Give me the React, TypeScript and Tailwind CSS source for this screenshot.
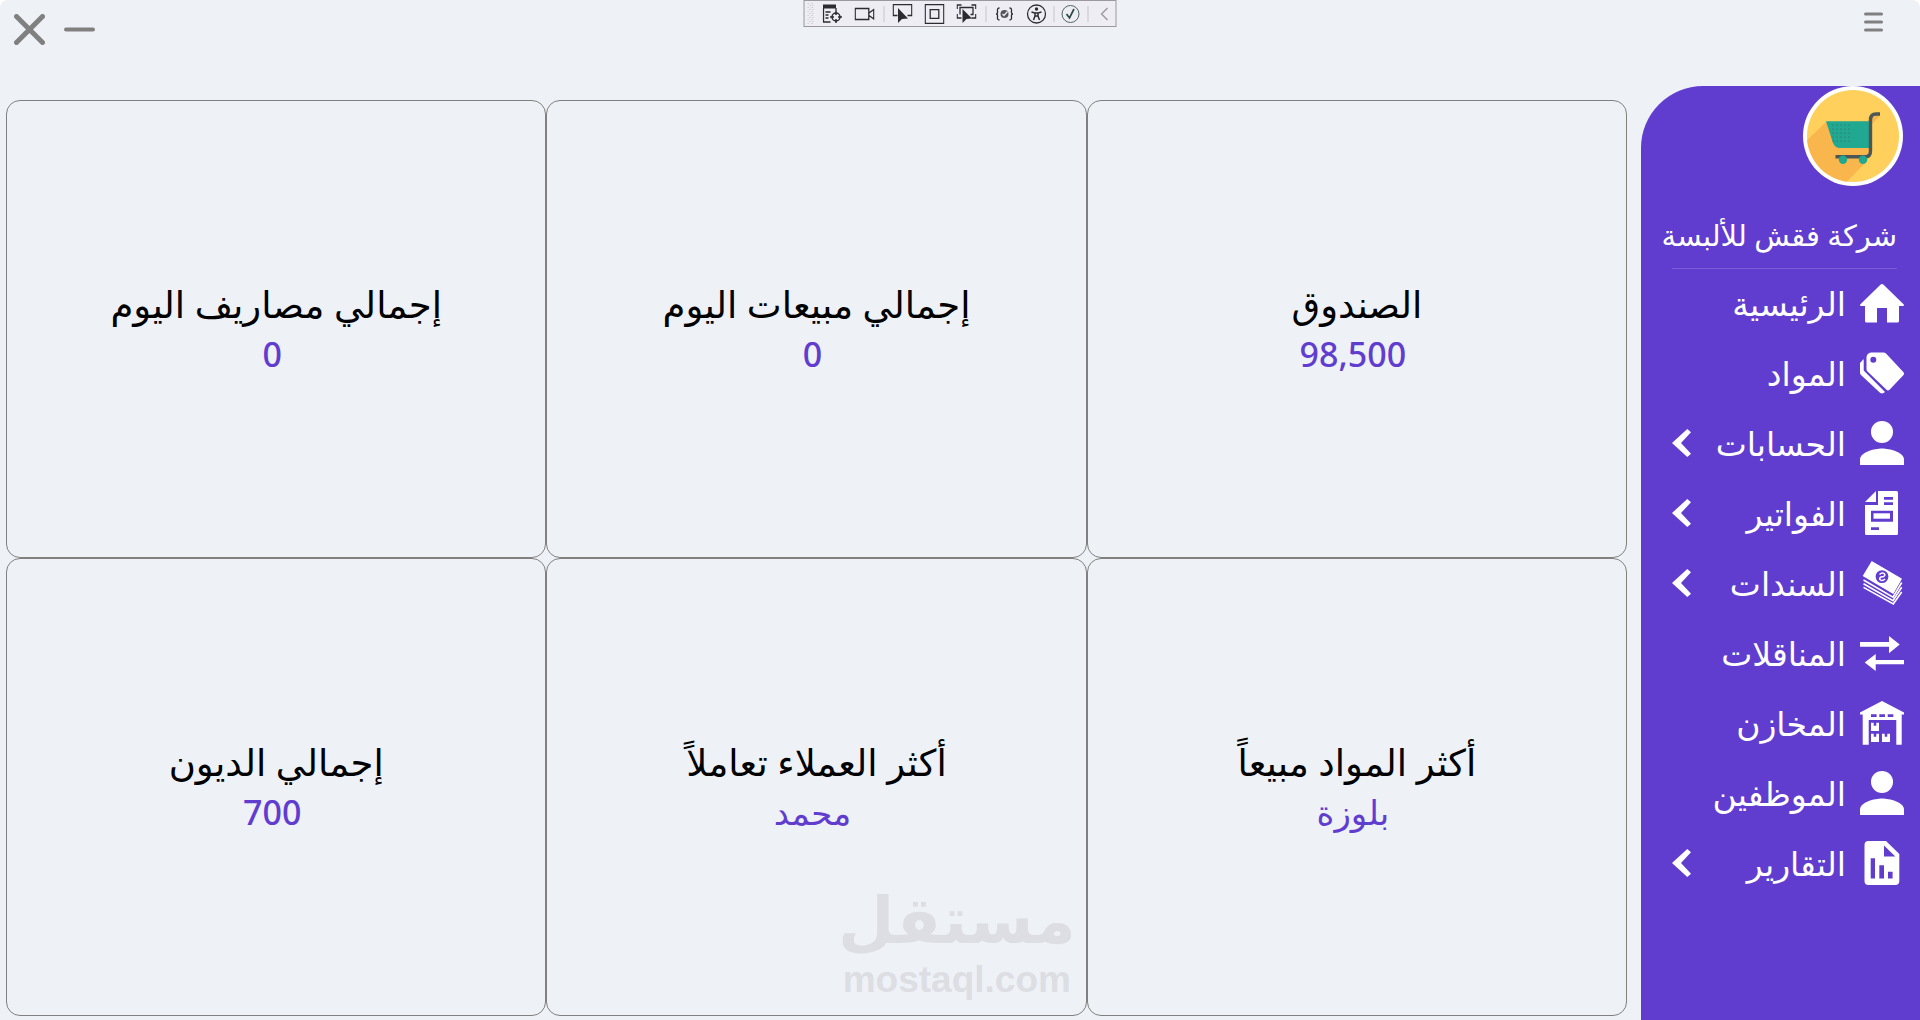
import type { ReactNode } from 'react';
import { clsx } from 'clsx';

interface MenuItem {
  label: string;
  icon: ReactNode;
  expandable?: boolean;
}

interface Stat {
  title: string;
  value: string;
}

const PersonIcon = () => (
  <svg className="size-11 overflow-visible" viewBox="4 4.4 16 16" fill="currentColor">
    <circle cx="12" cy="8" r="4" />
    <path d="M4 20v-2c0-2.66 5.33-4 8-4s8 1.34 8 4v2z" />
  </svg>
);

const HomeIcon = () => (
  <svg className="size-11" viewBox="0 0 44 44" fill="currentColor">
    <path d="M20.4 2.8Q22 1.2 23.6 2.8L43.8 22.6Q44.4 24 43 24H39v15q0 1.5-1.5 1.5H27V26H17v14.5H6.5Q5 40.5 5 39V24H1Q-.4 24 .2 22.6z" />
  </svg>
);

const TagsIcon = () => (
  <svg className="size-11" viewBox="0 0 44 44" fill="currentColor">
    <path
      fillRule="evenodd"
      d="M11 .5h12.5q1.5 0 2.5 1L43.3 20q1.4 1.7 0 3.3L29.5 37.8q-1.5 1.4-3 0L7.5 19.5q-1-1-1-2.5V5Q7 1 11 .5zM13.3 4.7a3 3 0 1 0 0 6 3 3 0 0 0 0-6z"
    />
    <path d="M3.7 7v11.5L25 40q-2.5 2.5-5 .8L1 23q-1-1-1-2.5v-9.5z" />
  </svg>
);

const InvoiceIcon = () => (
  <svg className="size-11 overflow-visible" viewBox="0 1 44 44" fill="currentColor">
    <path d="M16 0v11H5z" />
    <path
      fillRule="evenodd"
      d="M18 0h18.5Q38 0 38 1.5v41q0 1.5-1.5 1.5h-30Q5 44 5 42.5V14h13zM24 6v2.7h9V6zM24 11.3V14h9v-2.7zM11 19.7v11h22v-11zM11 36.3V39h8v-2.7z"
    />
    <path d="M13.5 22.3H30v5.4H13.5z" />
  </svg>
);

const MoneyIcon = () => (
  <svg className="size-11 overflow-visible" viewBox="0 0 44 44" fill="none" stroke="currentColor">
    <path
      fill="currentColor"
      stroke="none"
      fillRule="evenodd"
      d="M11.7-1 42 16.7 33.3 32 2.7 14zM22 8.2a6.4 6.4 0 1 0 0 12.8 6.4 6.4 0 0 0 0-12.8z"
    />
    <path
      strokeWidth="1.6"
      d="M3.5 18 33 35.2l8.7-14.7M3.5 21.7 33 38.6l8.7-13.4M3.5 25.4 33.3 42l8.4-12"
    />
    <path
      strokeWidth="1.5"
      d="M19.5 12.5q2.5-2.5 4.5-1t-.5 3l-2.5.5q-2.5 1.5-.5 3t4.5-1"
    />
  </svg>
);

const TransferIcon = () => (
  <svg className="size-11" viewBox="0 0 44 44" fill="currentColor">
    <path d="M0 10h29V4l10.7 8.6L29 21.3v-6.6H0zM44 32.2H15.7V39l-11-8.6 11-8.4v6H44z" />
  </svg>
);

const WarehouseIcon = () => (
  <svg className="size-11 overflow-visible" viewBox="0 0 44 44" fill="currentColor">
    <path
      fillRule="evenodd"
      d="M22-1 44 10.5v2h-2.3v30.2h-5.4V18H8.7v24.7h-6V12.5H0v-2zM11 12.3V15h5.6v-2.7zM19.3 12.3V15H25v-2.7zM27.7 12.3V15h5.6v-2.7z"
    />
    <path d="M11 20.7h2.7v3h2.6v-3H19V29h-8zM11 31.7h2.7v3h2.6v-3H19V40h-8zM22 31.7h2.7v3h2.6v-3H30V40h-8z" />
  </svg>
);

const ReportIcon = () => (
  <svg className="size-11 overflow-visible" viewBox="0 1 44 44" fill="currentColor">
    <path
      fillRule="evenodd"
      d="M8.5 0H26l13.3 13v27q0 4-4 4H8.5q-4 0-4-4V4q0-4 4-4zM24 4.5v11h11.3zM10.7 17.3v20.2H15V17.3zM19.3 24.3v13.2H24V24.3zM28 30.8v6.7h4.6v-6.7z"
    />
  </svg>
);

const CartLogo = () => (
  <svg className="size-25" viewBox="0 0 100 100">
    <clipPath id="disc">
      <circle cx="50" cy="50" r="46" />
    </clipPath>
    <circle cx="50" cy="50" r="50" fill="#fff" />
    <circle cx="50" cy="50" r="46" fill="#ffd15c" />
    <g clipPath="url(#disc)">
      <path d="M23 36-5 63v42h40L65 74l4-36 8-8V27l-13 8z" fill="#f8b64c" />
    </g>
    <path d="M23 35.3h43V62H37q-5 0-7-5z" fill="#20a890" />
    <g fill="#4b5a5a">
      {[0, 1, 2, 3, 4].map((row) =>
        [0, 1, 2, 3, 4].map((col) => (
          <circle key={`${row}-${col}`} cx={30 + col * 4} cy={39 + row * 4} r=".6" />
        ))
      )}
    </g>
    <path
      d="M77 28h-4q-5.5 0-5.5 6v31q0 5.7-5 5.7h-30"
      fill="none"
      stroke="#4d5656"
      strokeWidth="3.4"
    />
    <circle cx="40" cy="73.7" r="4.2" fill="#20a890" />
    <circle cx="60" cy="73.7" r="4.2" fill="#20a890" />
  </svg>
);

const menu: MenuItem[] = [
  { label: 'الرئيسية', icon: <HomeIcon /> },
  { label: 'المواد', icon: <TagsIcon /> },
  { label: 'الحسابات', icon: <PersonIcon />, expandable: true },
  { label: 'الفواتير', icon: <InvoiceIcon />, expandable: true },
  { label: 'السندات', icon: <MoneyIcon />, expandable: true },
  { label: 'المناقلات', icon: <TransferIcon /> },
  { label: 'المخازن', icon: <WarehouseIcon /> },
  { label: 'الموظفين', icon: <PersonIcon /> },
  { label: 'التقارير', icon: <ReportIcon />, expandable: true },
];

const stats: Stat[] = [
  { title: 'الصندوق', value: '98,500' },
  { title: 'إجمالي مبيعات اليوم', value: '0' },
  { title: 'إجمالي مصاريف اليوم', value: '0' },
  { title: 'أكثر المواد مبيعاً', value: 'بلوزة' },
  { title: 'أكثر العملاء تعاملاً', value: 'محمد' },
  { title: 'إجمالي الديون', value: '700' },
];

const ToolButton = ({ label, children }: { label: string; children: ReactNode }) => (
  <button aria-label={label} className="flex w-8 shrink-0 items-center justify-center">
    <svg
      className="size-5"
      viewBox="0 0 20 20"
      fill="none"
      stroke="#2b2b30"
      strokeWidth="1.3"
    >
      {children}
    </svg>
  </button>
);

const ToolSeparator = ({ className }: { className?: string }) => (
  <span className={clsx('flex h-4 shrink-0 justify-center', className)}>
    <span className="w-px bg-[#c6c5cb]" />
  </span>
);

const DebugToolbar = () => (
  <div
    dir="ltr"
    className="absolute top-0 left-1/2 flex h-[27px] w-[313px] -translate-x-1/2 items-center overflow-hidden border border-[#9b999e] bg-[#eeedf3]"
  >
    <svg className="mx-[3px] h-[22px] w-[6px] shrink-0" viewBox="0 0 6 22" fill="#b5b4ba">
      {[0, 1, 2, 3, 4, 5, 6, 7, 8, 9, 10].map((i) => (
        <g key={i}>
          <rect x={i % 2 ? 2 : 0} y={i * 2} width="1" height="1" />
          <rect x={i % 2 ? 5 : 4} y={i * 2} width="1" height="1" />
        </g>
      ))}
    </svg>
    <ToolButton label="Live visual tree">
      <path d="M.5 2.5h13" strokeWidth="4" />
      <path d="M1 4v14h7M3 8h5M3 11h3M3 14h3M13.5 4v3" />
      <circle cx="13.5" cy="13" r="4" strokeWidth="1.5" />
      <path d="M13.5 7v4M13.5 15v4M7.5 13h4M15.5 13h4" strokeWidth="1.5" />
    </ToolButton>
    <ToolButton label="Record">
      <path d="M.7 4.5h13.6v11H.7zM14.5 9l4.8-3.5V15l-4.8-3.5" />
    </ToolButton>
    <ToolSeparator className="w-[6px]" />
    <ToolButton label="Select element">
      <path d="M5 11.5H.7V.7h18.6v10.8H15" />
      <path d="M5.5 4v15l4-4 6-.5z" fill="#2b2b30" stroke="none" />
    </ToolButton>
    <ToolButton label="Display layout adorners">
      <path d="M.7.7h18.6v18.6H.7zM5.7 5.7h8.6v8.6H5.7z" />
    </ToolButton>
    <ToolButton label="Track focused element">
      <path d="M.7 5V1H5M15 1h4.3v4M.7 10v4H5M19.3 10v4H15M3.5 10.5v-7h13v7H14" />
      <path d="M6 5v14l4-4 5.5-.5z" fill="#2b2b30" stroke="none" />
    </ToolButton>
    <ToolSeparator className="w-[6px]" />
    <ToolButton label="Binding failures">
      <path d="M5 4Q2.500 4 3 7t-1.5 3Q3.5 10 3 13t2 3M15 4q2.5 0 2 3t1.5 3q-2 0-1.5 3t-2 3" />
      <circle cx="10" cy="10" r="4" fill="#55555a" stroke="none" />
      <path d="m8 10 1.5 1.5L13 7.5" stroke="#eeedf3" />
    </ToolButton>
    <ToolButton label="Accessibility">
      <circle cx="10" cy="10" r="9" />
      <circle cx="10" cy="5" r="1.7" fill="#2b2b30" stroke="none" />
      <path d="M5 8l3.5 1v3L7 16M15 8l-3.5 1v3l1.5 4M8.5 9h3M9 12h2" strokeWidth="1.5" />
    </ToolButton>
    <ToolSeparator className="w-[2px]" />
    <ToolButton label="Hot reload">
      <circle cx="10" cy="10" r="8.5" stroke="#4f6763" strokeWidth="1" />
      <path d="m6 10 3 4 4.5-9" stroke="#2c4a45" strokeWidth="1.7" />
    </ToolButton>
    <ToolSeparator className="w-[2px]" />
    <ToolButton label="Collapse">
      <path d="m13 4-6 6 6 6" stroke="#98979d" />
    </ToolButton>
  </div>
);

const Header = () => (
  <header className="flex h-[86px] shrink-0 items-start justify-between">
    <button aria-label="القائمة" className="mt-3 mr-[37px]">
      <svg
        className="h-5 w-[19px]"
        viewBox="0 0 19 20"
        stroke="#808080"
        strokeWidth="3"
        strokeLinecap="round"
      >
        <path d="M1.5 2h16M1.5 10h16M1.5 18h16" />
      </svg>
    </button>
    <div className="mt-[14px] ml-[14px] flex gap-[19px]">
      <button aria-label="تصغير">
        <svg
          className="size-[31px]"
          viewBox="0 0 31 31"
          stroke="#808080"
          strokeWidth="4"
          strokeLinecap="round"
        >
          <path d="M2 15.5h27" />
        </svg>
      </button>
      <button aria-label="إغلاق">
        <svg
          className="size-[31px]"
          viewBox="0 0 31 31"
          stroke="#808080"
          strokeWidth="5"
          strokeLinecap="round"
        >
          <path d="m2.5 2.5 26 26M28.5 2.5l-26 26" />
        </svg>
      </button>
    </div>
  </header>
);

const Sidebar = () => (
  <aside className="flex w-[279px] shrink-0 flex-col rounded-tl-[62px] bg-[#613dcf] text-white">
    <div className="pr-[17px]">
      <CartLogo />
    </div>
    <div className="mt-[29px] mr-[23px] ml-[31px] flex h-[54px] border-b border-[#7b5bd8]">
      <h1 className="text-[29px] leading-10 whitespace-nowrap">شركة فقش للألبسة</h1>
    </div>
    <nav>
      <ul>
        {menu.map(({ label, icon, expandable }) => (
          <li key={label}>
            <a
              href="#"
              className="flex h-[70px] items-center gap-[14px] pr-4 pl-[31px]"
            >
              {icon}
              <span className="text-[33px] leading-10">{label}</span>
              {expandable && (
                <svg
                  className="mr-auto h-7 w-[19px] overflow-visible"
                  viewBox="0 1 19 28"
                  fill="currentColor"
                >
                  <path d="M15.3 0 19 3.3 9 14l10 10.7-3.7 3.3L0 14z" />
                </svg>
              )}
            </a>
          </li>
        ))}
      </ul>
    </nav>
  </aside>
);

const Watermark = () => (
  <div
    aria-hidden="true"
    className="absolute right-[10px] bottom-[15px] flex flex-col items-center font-bold text-[#dddee3]"
  >
    <span className="font-['DejaVu_Sans',sans-serif] text-[65px] leading-[78px]">
      مستقل
    </span>
    <span dir="ltr" className="font-['Liberation_Sans',sans-serif] text-[37px] leading-10">
      mostaql.com
    </span>
  </div>
);

const StatCard = ({ title, value, children }: Stat & { children?: ReactNode }) => (
  <section className="relative flex flex-col items-center justify-center rounded-[14px] border border-[#808080] leading-[51px]">
    <h2 className="text-[37px] text-black">{title}</h2>
    <p className="pr-2 text-[34px] font-medium text-[#613dcf]">{value}</p>
    {children}
  </section>
);

export default function App() {
  return (
    <div
      dir="rtl"
      className="relative flex h-screen flex-col overflow-hidden rounded-t-lg bg-[#eef1f6] font-['Noto_Sans','DejaVu_Sans',sans-serif]"
    >
      <Header />
      <DebugToolbar />
      <div className="flex min-h-0 grow">
        <Sidebar />
        <main className="mt-[14px] mr-[14px] mb-1 ml-[6px] grid grow grid-cols-3 grid-rows-2">
          {stats.map((stat, index) => (
            <StatCard key={stat.title} {...stat}>
              {index === 4 && <Watermark />}
            </StatCard>
          ))}
        </main>
      </div>
    </div>
  );
}
